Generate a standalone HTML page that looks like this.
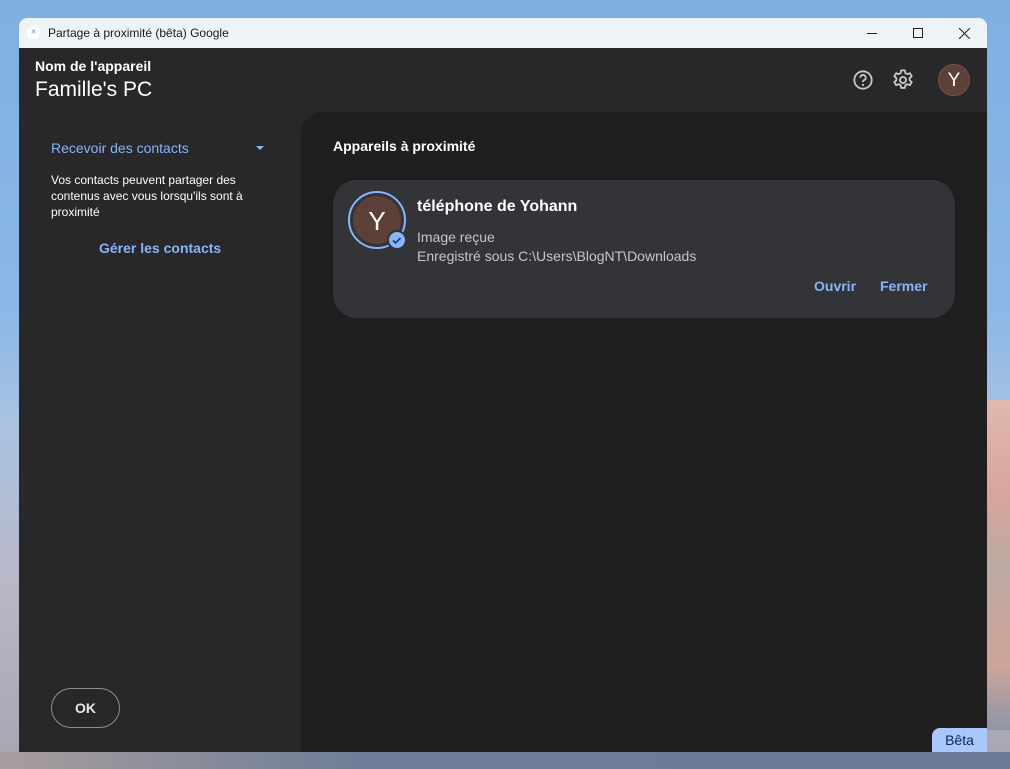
<!DOCTYPE html>
<html><head><style>
*{margin:0;padding:0;box-sizing:border-box}
html,body{width:1010px;height:769px;overflow:hidden}
body{position:relative;font-family:"Liberation Sans",sans-serif;background:linear-gradient(180deg,#7fb0e2 0%,#8ab8e6 40%,#a9c2e2 55%,#b8b8c8 75%,#a7a5b0 100%)}
.pink{position:absolute;left:980px;top:400px;width:30px;height:330px;background:linear-gradient(180deg,#e0b8b0,#d6a59b 30%,#bcaaa2 50%,#cfa59a 80%,#8d96a8)}
.bot{position:absolute;left:0;top:752px;width:1010px;height:17px;background:linear-gradient(90deg,#a89d9e,#6f7e98 35%,#6b7b95)}
.win{position:absolute;left:19px;top:18px;width:968px;height:734px;border-radius:8px 8px 0 0;overflow:hidden;background:#28282a}
.title{height:30px;background:#eef3f8;position:relative;font-size:12px;color:#1a1a1a}
.title .t{position:absolute;left:29px;top:8px}
.title .ic{position:absolute;left:8px;top:8px;width:13px;height:13px;border-radius:50%;background:#fff;font-size:7px;color:#5b8fe0;text-align:center;line-height:13px}
.wc{position:absolute;top:0;height:30px;width:46px;display:flex;align-items:center;justify-content:center}
.h1{position:absolute;left:16px;top:40px;color:#fff;font-size:14px;font-weight:bold}
.h2{position:absolute;left:16px;top:60px;color:#fff;font-size:21px}
.main{position:absolute;left:282px;top:94px;width:686px;height:640px;background:#1f1f1f;border-radius:22px 0 0 0}
.card{position:absolute;left:32px;top:68px;width:622px;height:138px;background:#333438;border-radius:24px}
.blue{color:#8ab4f8}
</style></head><body>
<div class="pink"></div><div class="bot"></div>
<div class="win">
 <div class="title"><div class="ic">✕</div><div class="t">Partage à proximité (bêta) Google</div>
  <div class="wc" style="left:830px"><div style="width:10px;height:1px;background:#222"></div></div>
  <div class="wc" style="left:876px"><div style="width:10px;height:10px;border:1px solid #222"></div></div>
  <div class="wc" style="left:922px"><svg width="11" height="11"><path d="M0 0L11 11M11 0L0 11" stroke="#222" stroke-width="1"/></svg></div>
 </div>
 <div class="h1">Nom de l'appareil</div>
 <div class="h2">Famille's PC</div>
 <svg style="position:absolute;left:833px;top:51px" width="22" height="22" viewBox="0 0 24 24"><circle cx="12" cy="12" r="9.5" fill="none" stroke="#c8c8c8" stroke-width="2"/><path d="M9 9.5a3 3 0 1 1 4 2.8c-.8.4-1 1-1 1.9" fill="none" stroke="#c8c8c8" stroke-width="2"/><circle cx="12" cy="17.3" r="1.2" fill="#c8c8c8"/></svg>
 <svg style="position:absolute;left:873px;top:51px" width="22" height="22" viewBox="0 0 24 24"><path fill="none" stroke="#c8c8c8" stroke-width="2" stroke-linejoin="round" d="M10 1.5h4l.6 3 2 1.1 2.9-1 2 3.4-2.3 2v2.2l2.3 2-2 3.4-2.9-1-2 1.1-.6 3h-4l-.6-3-2-1.1-2.9 1-2-3.4 2.3-2v-2.2l-2.3-2 2-3.4 2.9 1 2-1.1z"/><circle cx="12" cy="12" r="3.3" fill="none" stroke="#c8c8c8" stroke-width="2"/></svg>
 <div style="position:absolute;left:919px;top:46px;width:32px;height:32px;border-radius:50%;background:#5d4037;border:1px solid #7a5348;color:#fff;font-size:19px;text-align:center;line-height:32px">Y</div>
 <div class="blue" style="position:absolute;left:32px;top:122px;font-size:14px">Recevoir des contacts</div>
 <div style="position:absolute;left:237px;top:128px;width:0;height:0;border-left:4px solid transparent;border-right:4px solid transparent;border-top:4px solid #8ab4f8"></div>
 <div style="position:absolute;left:32px;top:154px;width:220px;font-size:12px;line-height:16px;color:#fff">Vos contacts peuvent partager des contenus avec vous lorsqu'ils sont à proximité</div>
 <div class="blue" style="position:absolute;left:80px;top:222px;font-size:14px;font-weight:bold">Gérer les contacts</div>
 <div style="position:absolute;left:32px;top:670px;width:69px;height:40px;border:1px solid #8e8e8e;border-radius:20px;color:#e8e8e8;font-size:14px;font-weight:bold;text-align:center;line-height:38px">OK</div>
 <div class="main">
  <div style="position:absolute;left:32px;top:26px;color:#fff;font-size:14px;font-weight:bold">Appareils à proximité</div>
  <div class="card">
   <div style="position:absolute;left:15px;top:11px;width:58px;height:58px;border-radius:50%;border:2px solid #8ab4f8;padding:3px"><div style="width:48px;height:48px;border-radius:50%;background:#5d4037;color:#fff;font-size:26px;text-align:center;line-height:50px">Y</div></div>
   <div style="position:absolute;left:54px;top:50px;width:20px;height:20px;border-radius:50%;background:#8ab4f8;border:2px solid #333438"><svg width="16" height="16" viewBox="0 0 16 16"><path d="M4 8.5l2.5 2.5 5-5" fill="none" stroke="#1b3a6b" stroke-width="1.6"/></svg></div>
   <div style="position:absolute;left:84px;top:18px;color:#fff;font-size:16px;font-weight:bold">téléphone de Yohann</div>
   <div style="position:absolute;left:84px;top:49px;color:#c4c7c5;font-size:14px">Image reçue</div>
   <div style="position:absolute;left:84px;top:68px;color:#c4c7c5;font-size:14px">Enregistré sous C:\Users\BlogNT\Downloads</div>
   <div class="blue" style="position:absolute;left:481px;top:98px;font-size:14px;font-weight:bold">Ouvrir</div>
   <div class="blue" style="position:absolute;left:547px;top:98px;font-size:14px;font-weight:bold">Fermer</div>
  </div>
 </div>
</div>
<div style="position:absolute;left:932px;top:728px;width:55px;height:24px;background:#a8c7fa;border-radius:8px 0 0 0;color:#0b2a63;font-size:14px;text-align:center;line-height:24px">Bêta</div>
</body></html>
